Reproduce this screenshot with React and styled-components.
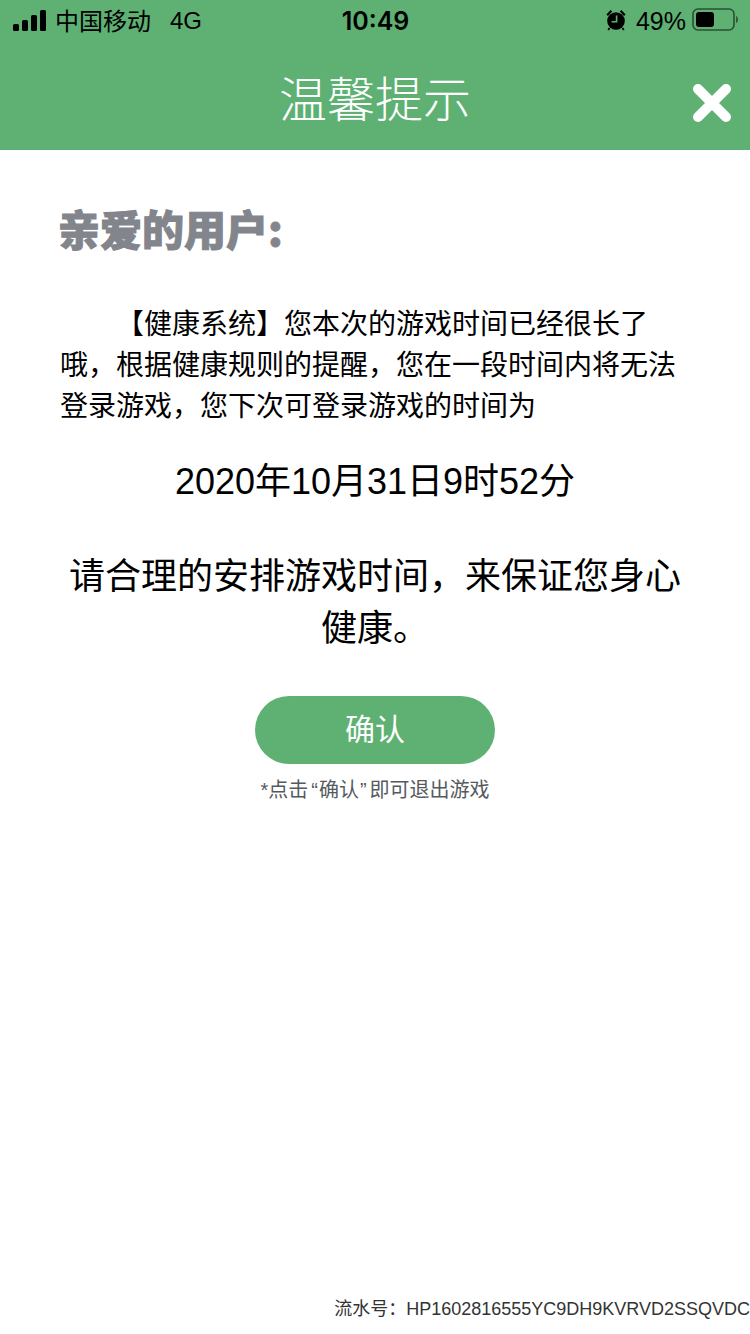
import styled, { createGlobalStyle } from "styled-components";

const GREEN = "#5eb172";

const GlobalStyle = createGlobalStyle`
  html, body {
    margin: 0;
    padding: 0;
    background: #fff;
  }
  body {
    font-family: "Liberation Sans", "Noto Sans CJK SC", sans-serif;
  }
`;

function SignalIcon() {
  return (
    <svg width="34" height="21" viewBox="0 0 34 21">
      <rect x="0" y="14" width="6" height="7" rx="1.5" fill="#000" />
      <rect x="9" y="10" width="6" height="11" rx="1.5" fill="#000" />
      <rect x="18" y="5" width="6" height="16" rx="1.5" fill="#000" />
      <rect x="27" y="0" width="6" height="21" rx="1.5" fill="#000" />
    </svg>
  );
}

function AlarmIcon() {
  return (
    <svg width="20" height="22" viewBox="0 0 20 22">
      <circle cx="10" cy="12" r="8.8" fill="#000" />
      <path d="M0.4 5.5 L4.6 1 L6.2 2.6 L2 7 Z M19.6 5.5 L15.4 1 L13.8 2.6 L18 7 Z" fill="#000" />
      <path d="M3.6 19 L2.2 21 M16.4 19 L17.8 21" stroke="#000" strokeWidth="1.8" />
      <path d="M10.6 6.4 V12.8 H5.6" stroke={GREEN} strokeWidth="1.6" fill="none" />
    </svg>
  );
}

function BatteryIcon() {
  return (
    <svg width="46" height="24" viewBox="0 0 46 24">
      <rect x="1" y="1" width="41" height="21" rx="5" fill="none" stroke="#000" strokeOpacity="0.55" strokeWidth="1.6" />
      <rect x="4" y="4" width="18" height="15" rx="3" fill="#000" />
      <path d="M44 8 C45.5 8.5 46 10 46 11.5 C46 13 45.5 14.5 44 15 Z" fill="#000" fillOpacity="0.5" />
    </svg>
  );
}

function CloseIcon() {
  return (
    <svg width="38" height="38" viewBox="0 0 38 38">
      <path d="M5 5 L33 33 M33 5 L5 33" stroke="#fff" strokeWidth="10" strokeLinecap="round" />
    </svg>
  );
}

export default function App() {
  return (
    <Page>
      <GlobalStyle />
      <TopBar>
        <StatusBar>
          <StatusSide>
            <SignalIcon />
            <Carrier>中国移动</Carrier>
            <Network>4G</Network>
          </StatusSide>
          <Clock>10:49</Clock>
          <StatusRight>
            <AlarmIcon />
            <Percent>49%</Percent>
            <BatteryIcon />
          </StatusRight>
        </StatusBar>
        <TitleRow>
          <Title>温馨提示</Title>
          <CloseBtn>
            <CloseIcon />
          </CloseBtn>
        </TitleRow>
      </TopBar>

      <Content>
        <Greeting>亲爱的用户:</Greeting>
        <Notice>
          【健康系统】您本次的游戏时间已经很长了哦，根据健康规则的提醒，您在一段时间内将无法登录游戏，您下次可登录游戏的时间为
        </Notice>
        <DateText>2020年10月31日9时52分</DateText>
        <Advice>请合理的安排游戏时间，来保证您身心健康。</Advice>
        <ConfirmBtn>确认</ConfirmBtn>
        <Hint>
          *点击<Quote>“</Quote>确认<Quote $closing>”</Quote>即可退出游戏
        </Hint>
      </Content>

      <Serial>流水号：HP1602816555YC9DH9KVRVD2SSQVDC</Serial>
    </Page>
  );
}

const Page = styled.div`
  display: flex;
  flex-direction: column;
  width: 750px;
  height: 1334px;
  background: #fff;
  overflow: hidden;
`;

const TopBar = styled.header`
  background: ${GREEN};
  height: 150px;
  flex-shrink: 0;
`;

const StatusBar = styled.div`
  display: grid;
  grid-template-columns: 1fr auto 1fr;
  align-items: center;
  height: 40px;
  padding: 0 12px 0 13px;
  color: #000;
`;

const StatusSide = styled.div`
  display: flex;
  align-items: center;
`;

const StatusRight = styled(StatusSide)`
  justify-content: flex-end;
`;

const Carrier = styled.span`
  font-size: 24px;
  margin: -2px 0 0 8px;
`;

const Network = styled.span`
  font-size: 24px;
  margin-left: 19px;
  padding-top: 2px;
`;

const Clock = styled.span`
  font-family: Inter, "Liberation Sans", sans-serif;
  font-size: 25px;
  font-weight: 600;
  padding-top: 2px;
`;

const Percent = styled.span`
  font-size: 25px;
  margin: 0 6px 0 10px;
  padding-top: 2px;
`;

const TitleRow = styled.div`
  position: relative;
  display: flex;
  align-items: center;
  justify-content: center;
  height: 110px;
`;

const Title = styled.h1`
  margin: 0;
  padding-top: 2px;
  font-family: "Noto Sans CJK SC", sans-serif;
  font-size: 48px;
  font-weight: 300;
  color: #fff;
`;

const CloseBtn = styled.button`
  position: absolute;
  right: 19px;
  top: 44px;
  display: flex;
  width: 38px;
  height: 38px;
  padding: 0;
  border: none;
  background: none;
`;

const Content = styled.main`
  display: flex;
  flex-direction: column;
  align-items: center;
  padding: 47px 60px 0;
  font-family: "Noto Sans CJK SC", sans-serif;
  color: #000;
`;

const Greeting = styled.h2`
  align-self: flex-start;
  margin: 0 0 0 -2px;
  font-size: 42px;
  line-height: 62px;
  font-weight: 900;
  color: #82858b;
  -webkit-text-stroke: 1px #82858b;
`;

const Notice = styled.p`
  margin: 43px 0 0;
  font-size: 28px;
  line-height: 41px;
  text-indent: 56px;
  text-align: left;
`;

const DateText = styled.p`
  margin: 31px 0 0;
  font-family: "Liberation Sans", "Noto Sans CJK SC", sans-serif;
  font-size: 36px;
  line-height: 52px;
`;

const Advice = styled.p`
  margin: 39px -5px 0;
  font-size: 36px;
  line-height: 52px;
  text-align: center;
`;

const ConfirmBtn = styled.button`
  width: 240px;
  height: 68px;
  margin-top: 45px;
  padding: 0 0 6px;
  border: none;
  border-radius: 34px;
  background: ${GREEN};
  color: #fff;
  font-family: "Noto Sans CJK SC", sans-serif;
  font-size: 30px;
`;

const Hint = styled.p`
  margin: 11px 0 0;
  font-family: "Liberation Sans", "Noto Sans CJK SC", sans-serif;
  font-size: 20px;
  line-height: 30px;
  color: #555a60;
`;

const Quote = styled.span`
  padding: ${(props) => (props.$closing ? "0 3px 0 1px" : "0 1px 0 3px")};
`;

const Serial = styled.footer`
  margin-top: auto;
  padding-bottom: 13px;
  text-align: right;
  font-size: 18px;
  line-height: 24px;
  color: #333;
  white-space: nowrap;
`;
